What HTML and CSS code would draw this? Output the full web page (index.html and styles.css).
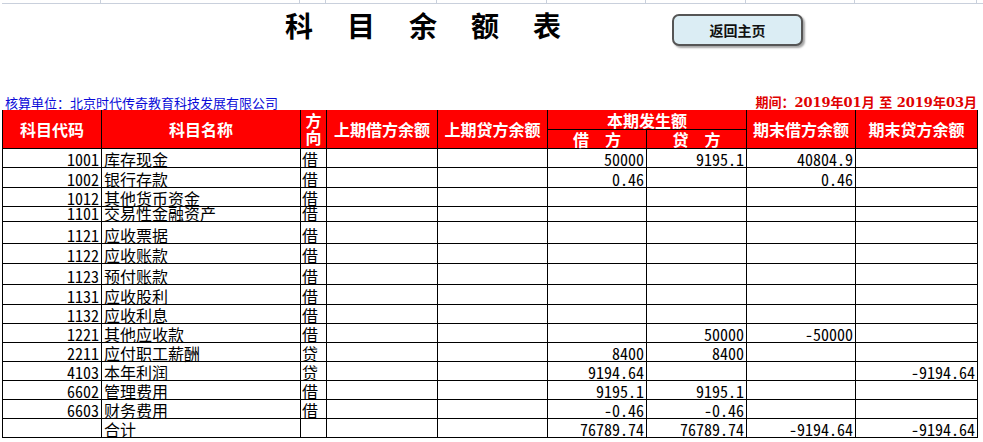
FILE: index.html
```html
<!DOCTYPE html>
<html lang="zh-CN">
<head>
<meta charset="utf-8">
<title>科目余额表</title>
<link rel="stylesheet" href="styles.css">
</head>
<body>
<div class="sheet">
  <div class="strip">
    <div></div><div></div><div></div><div></div><div></div><div></div><div></div><div></div><div></div>
  </div>
  <div class="titlebar">
    <h1 class="title">科目余额表</h1>
    <button class="home" type="button">返回主页</button>
  </div>
  <div class="inforow">
    <span class="unit">核算单位：北京时代传奇教育科技发展有限公司</span>
    <span class="period">期间：2019年01月 至 2019年03月</span>
  </div>
  <div class="grid">
    <div class="c hd rs">科目代码</div>
    <div class="c hd rs">科目名称</div>
    <div class="c hd rs dir">方<br>向</div>
    <div class="c hd rs">上期借方余额</div>
    <div class="c hd rs">上期贷方余额</div>
    <div class="c hd cs">本期发生额</div>
    <div class="c hd rs">期末借方余额</div>
    <div class="c hd rs">期末贷方余额</div>
    <div class="c hd">借　方</div>
    <div class="c hd">贷　方</div>

    <div class="c n">1001</div><div class="c">库存现金</div><div class="c d">借</div><div class="c"></div><div class="c"></div><div class="c n">50000</div><div class="c n">9195.1</div><div class="c n">40804.9</div><div class="c"></div>
    <div class="c n">1002</div><div class="c">银行存款</div><div class="c d">借</div><div class="c"></div><div class="c"></div><div class="c n">0.46</div><div class="c"></div><div class="c n">0.46</div><div class="c"></div>
    <div class="c n">1012</div><div class="c">其他货币资金</div><div class="c d">借</div><div class="c"></div><div class="c"></div><div class="c"></div><div class="c"></div><div class="c"></div><div class="c"></div>
    <div class="c n">1101</div><div class="c">交易性金融资产</div><div class="c d">借</div><div class="c"></div><div class="c"></div><div class="c"></div><div class="c"></div><div class="c"></div><div class="c"></div>
    <div class="c n">1121</div><div class="c">应收票据</div><div class="c d">借</div><div class="c"></div><div class="c"></div><div class="c"></div><div class="c"></div><div class="c"></div><div class="c"></div>
    <div class="c n">1122</div><div class="c">应收账款</div><div class="c d">借</div><div class="c"></div><div class="c"></div><div class="c"></div><div class="c"></div><div class="c"></div><div class="c"></div>
    <div class="c n">1123</div><div class="c">预付账款</div><div class="c d">借</div><div class="c"></div><div class="c"></div><div class="c"></div><div class="c"></div><div class="c"></div><div class="c"></div>
    <div class="c n">1131</div><div class="c">应收股利</div><div class="c d">借</div><div class="c"></div><div class="c"></div><div class="c"></div><div class="c"></div><div class="c"></div><div class="c"></div>
    <div class="c n">1132</div><div class="c">应收利息</div><div class="c d">借</div><div class="c"></div><div class="c"></div><div class="c"></div><div class="c"></div><div class="c"></div><div class="c"></div>
    <div class="c n">1221</div><div class="c">其他应收款</div><div class="c d">借</div><div class="c"></div><div class="c"></div><div class="c"></div><div class="c n">50000</div><div class="c n">-50000</div><div class="c"></div>
    <div class="c n">2211</div><div class="c">应付职工薪酬</div><div class="c d">贷</div><div class="c"></div><div class="c"></div><div class="c n">8400</div><div class="c n">8400</div><div class="c"></div><div class="c"></div>
    <div class="c n">4103</div><div class="c">本年利润</div><div class="c d">贷</div><div class="c"></div><div class="c"></div><div class="c n">9194.64</div><div class="c"></div><div class="c"></div><div class="c n">-9194.64</div>
    <div class="c n">6602</div><div class="c">管理费用</div><div class="c d">借</div><div class="c"></div><div class="c"></div><div class="c n">9195.1</div><div class="c n">9195.1</div><div class="c"></div><div class="c"></div>
    <div class="c n">6603</div><div class="c">财务费用</div><div class="c d">借</div><div class="c"></div><div class="c"></div><div class="c n">-0.46</div><div class="c n">-0.46</div><div class="c"></div><div class="c"></div>
    <div class="c"></div><div class="c">合计</div><div class="c d"></div><div class="c"></div><div class="c"></div><div class="c n">76789.74</div><div class="c n">76789.74</div><div class="c n">-9194.64</div><div class="c n">-9194.64</div>
  </div>
</div>
</body>
</html>
```

FILE: styles.css
```css
html, body {
  margin: 0;
  padding: 0;
  background: #fff;
}

.sheet {
  width: 983px;
  padding-left: 2px;
  box-sizing: border-box;
  font-family: "Noto Sans CJK SC", sans-serif;
}

.strip,
.grid {
  display: grid;
  grid-template-columns: 99px 199px 26px 111px 110px 99px 100px 109px 122px;
}

.strip {
  height: 3px;
  border-bottom: 1px solid #c9d0dc;
}

.strip div {
  border-right: 1px solid #c9d0dc;
}

.titlebar {
  height: 90px;
  display: flex;
  align-items: flex-start;
}

.title {
  margin: 7px 0 0 283px;
  font-size: 28px;
  line-height: 28px;
  font-weight: 700;
  letter-spacing: 34px;
  color: #000;
  white-space: nowrap;
}

.home {
  margin: 10px 0 0 77px;
  width: 131px;
  height: 32px;
  border: 2px solid #555;
  border-radius: 7px;
  background: #dbedf4;
  box-shadow: 2px 2px 2px rgba(0, 0, 0, 0.35);
  font-family: "Noto Sans CJK SC", sans-serif;
  font-size: 14px;
  font-weight: 700;
  color: #111;
  padding: 0;
}

.inforow {
  width: 976px;
  height: 16px;
  display: flex;
  justify-content: space-between;
  align-items: flex-end;
  font-size: 13px;
  line-height: 15px;
}

.unit {
  margin-left: 3px;
  color: #0a0ad8;
}

.period {
  margin-right: 1px;
  color: #e00000;
  font-weight: 700;
  font-family: "DejaVu Serif", "Noto Sans CJK SC", serif;
  font-size: 13px;
  white-space: pre;
}

.grid {
  width: 976px;
  border-left: 1px solid #000;
  box-sizing: border-box;
  grid-template-rows: 20px 19px 19px 20px 19px 15px 22px 20px 21px 20px 19px 19px 19px 19px 19px 19px 19px;
}

.c {
  border-right: 1px solid #000;
  border-bottom: 1px solid #000;
  font-size: 16px;
  line-height: 16px;
  display: flex;
  align-items: flex-end;
  padding: 0 2px 0 2px;
  white-space: nowrap;
  overflow: visible;
  color: #000;
  min-width: 0;
}

.n {
  justify-content: flex-end;
  font-family: "Noto Sans Mono CJK SC", "Liberation Mono", monospace;
}

.d {
  padding-left: 1px;
}

.hd {
  background: #ff0000;
  color: #fff;
  font-weight: 700;
  justify-content: center;
  align-items: center;
  padding: 0;
}

.rs {
  grid-row: span 2;
}

.cs {
  grid-column: span 2;
}

.dir {
  line-height: 17px;
  text-align: center;
}
```
